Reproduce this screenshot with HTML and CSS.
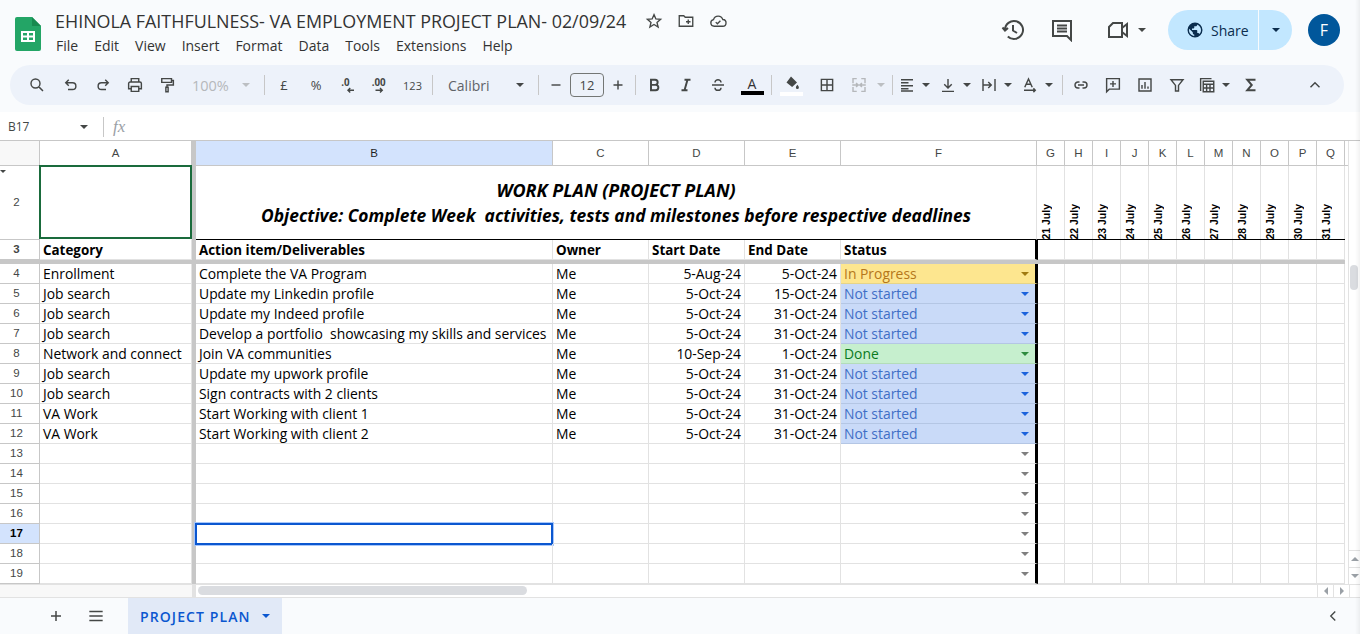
FILE: index.html
```html
<!DOCTYPE html>
<html lang="en">
<head>
    <meta charset="UTF-8">
    <meta name="viewport" content="width=device-width, initial-scale=1.0">
    <title>EHINOLA FAITHFULNESS- VA EMPLOYMENT PROJECT PLAN- 02/09/24</title>
    <link rel="stylesheet" href="styles.css">
</head>
<body>
    <!-- Title bar -->
    <header class="topbar">
        <svg class="logo" width="26" height="34" viewBox="0 0 26 34">
            <path d="M2 0h15l9 9v23a2 2 0 0 1-2 2H2a2 2 0 0 1-2-2V2a2 2 0 0 1 2-2z" fill="#23a566"/>
            <path d="M17 0l9 9h-9z" fill="#178a50"/>
            <path d="M6 14h14v11H6z M8 16v2.500h4V16z M14 16v2.500h4V16z M8 20.500V23h4v-2.500z M14 20.500V23h4v-2.500z" fill="#fff" fill-rule="evenodd"/>
        </svg>
        <div class="doc">
            <div class="doc-title">
                <span class="doc-name">EHINOLA FAITHFULNESS- VA EMPLOYMENT PROJECT PLAN- 02/09/24</span>
                <svg class="title-icon" viewBox="0 0 24 24"><path d="M12 3.500l2.500 5.800 6.300.5-4.800 4.100 1.500 6.100-5.500-3.300-5.500 3.300 1.500-6.100-4.800-4.100 6.300-.5z"/></svg>
                <svg class="title-icon" viewBox="0 0 24 24"><path d="M3 19V5h6l2 2h10v12z M12 13h6 M15 10v6"/></svg>
                <svg class="title-icon" viewBox="0 0 24 24"><path d="M7 19a4.500 4.500 0 0 1-1-8.900A6.500 6.500 0 0 1 18.400 10 4.500 4.500 0 0 1 18 19z M9 13.500l2.200 2.200 4-4"/></svg>
            </div>
            <nav class="menu">
                <span>File</span><span>Edit</span><span>View</span><span>Insert</span><span>Format</span><span>Data</span><span>Tools</span><span>Extensions</span><span>Help</span>
            </nav>
        </div>
        <div class="top-actions">
            <svg class="top-icon" viewBox="0 0 24 24"><path d="M4 12a9 9 0 1 1 2.800 6.500 M12 7v5.500l4 2.500 M1.500 9.500L4 12.500l3-2.500"/></svg>
            <svg class="top-icon comment-icon" viewBox="0 0 24 24"><path d="M3 3h18v19l-4-4H3z M7 7.500h10 M7 10.500h10 M7 13.500h10"/></svg>
            <svg class="top-icon video-icon" viewBox="0 0 24 24"><path d="M7 5h9v14H3V9z M16 10l5-4v12l-5-4"/></svg>
            <i class="arrow arrow-top"></i>
            <div class="share">
                <div class="share-main">
                    <svg width="18" height="18" viewBox="0 0 24 24"><path fill="#0b2d4e" d="M12 2a10 10 0 1 0 0 20 10 10 0 0 0 0-20zM4 12c0-.6.100-1.200.200-1.800L9 15v1c0 1.100.900 2 2 2v2c-3.900-.500-7-3.900-7-8zm13.900 5.400c-.300-.800-1-1.400-1.900-1.400h-1v-3c0-.600-.400-1-1-1H8v-2h2c.600 0 1-.400 1-1V7h2c1.100 0 2-.900 2-2v-.400c2.900 1.200 5 4.100 5 7.400 0 2.100-.800 4-2.100 5.400z"/></svg>
                    <span>Share</span>
                </div>
                <div class="share-more"><i class="arrow arrow-dark"></i></div>
            </div>
            <div class="avatar">F</div>
        </div>
    </header>

    <!-- Toolbar -->
    <div class="toolbar">
        <span class="tb tb-search"><svg viewBox="0 0 24 24"><path d="M10 4a6 6 0 1 0 0 12 6 6 0 0 0 0-12z M14.500 14.500L20 20"/></svg></span>
        <span class="tb"><svg viewBox="0 0 24 24"><path d="M9 5L5 9l4 4 M5 9h9a4.500 4.500 0 0 1 0 9H8"/></svg></span>
        <span class="tb"><svg viewBox="0 0 24 24"><path d="M15 5l4 4-4 4 M19 9h-9a4.500 4.500 0 0 0 0 9h6"/></svg></span>
        <span class="tb"><svg viewBox="0 0 24 24"><path d="M7 8V3.500h10V8 M7 17H3.500v-7a2 2 0 0 1 2-2h13a2 2 0 0 1 2 2v7H17 M7 14h10v6.500H7z"/></svg></span>
        <span class="tb"><svg viewBox="0 0 24 24"><path d="M5 3.500h13v5H5z M18 6h2.500v6H12v3 M10.500 15h3v6h-3z"/></svg></span>
        <span class="tb-zoom">100%<i class="arrow arrow-off"></i></span>
        <i class="sep"></i>
        <span class="tb tb-text">£</span>
        <span class="tb tb-text">%</span>
        <span class="tb"><svg viewBox="0 0 24 24"><text x="3" y="13" class="dec-text">.0</text><path d="M20 19h-8 M15 16l-3 3 3 3"/></svg></span>
        <span class="tb"><svg viewBox="0 0 24 24"><text x="1" y="13" class="dec-text">.00</text><path d="M6 19h9 M12 16l3 3-3 3"/></svg></span>
        <span class="tb tb-text tb-123">123</span>
        <i class="sep"></i>
        <span class="tb-font">Calibri<i class="arrow"></i></span>
        <i class="sep"></i>
        <span class="tb tb-narrow"><svg viewBox="0 0 24 24"><path d="M6 12h12"/></svg></span>
        <span class="font-size">12</span>
        <span class="tb tb-narrow"><svg viewBox="0 0 24 24"><path d="M6 12h12 M12 6v12"/></svg></span>
        <i class="sep sep-size"></i>
        <span class="tb"><svg viewBox="0 0 24 24"><path class="heavy" d="M8 5h5.500a3.300 3.300 0 0 1 0 6.800H8z M8 11.800h6.200a3.600 3.600 0 0 1 0 7.200H8z"/></svg></span>
        <span class="tb"><svg viewBox="0 0 24 24"><path class="heavy" d="M10 5h8 M6 19h8 M14 5l-4 14"/></svg></span>
        <span class="tb tb-strike"><svg viewBox="0 0 24 24"><path d="M4 12h16 M16 8.500c0-2-1.800-3.500-4-3.500s-4 1.500-4 3.500 M8 15.500c0 2 1.800 3.500 4 3.500s4-1.500 4-3.500"/></svg></span>
        <span class="tb tb-color"><b class="color-a">A</b><i class="color-bar"></i></span>
        <i class="sep"></i>
        <span class="tb tb-color tb-fill"><svg class="fill-icon" viewBox="0 0 24 24"><path fill="#444746" d="M12 2l8 8-6.500 6L6 10z M20.500 13s2 2.300 2 3.500a2 2 0 0 1-4 0c0-1.200 2-3.500 2-3.500z"/></svg><i class="color-bar color-bar-white"></i></span>
        <span class="tb"><svg viewBox="0 0 24 24"><path d="M4.500 4.500h15v15h-15z M12 4.500v15 M4.500 12h15"/></svg></span>
        <span class="tb tb-merge"><svg viewBox="0 0 24 24"><path d="M9 3.500H4v6 M15 3.500h5v6 M9 20.500H4v-6 M15 20.500h5v-6 M3 12h7 M21 12h-7 M8 9.500l3 2.500-3 2.500 M16 9.500l-3 2.500 3 2.500"/></svg><i class="arrow arrow-off"></i></span>
        <i class="sep sep-merge"></i>
        <span class="tb tb-drop"><svg viewBox="0 0 24 24"><path d="M4 5h16 M4 9h10 M4 13h16 M4 17h10 M4 20h16"/></svg><i class="arrow"></i></span>
        <span class="tb tb-drop"><svg viewBox="0 0 24 24"><path d="M12 4v12 M7 11l5 5 5-5 M4 20.500h16"/></svg><i class="arrow"></i></span>
        <span class="tb tb-drop"><svg viewBox="0 0 24 24"><path d="M4 4v16 M20 4v16 M4 12h11 M11 8l4 4-4 4"/></svg><i class="arrow"></i></span>
        <span class="tb tb-drop"><svg viewBox="0 0 24 24"><path d="M5 15L10 4l5 11 M7 11h6 M4 19h15 M16.500 16.500L19 19l-2.500 2.500"/></svg><i class="arrow"></i></span>
        <i class="sep sep-rot"></i>
        <span class="tb"><svg viewBox="0 0 24 24"><path d="M10 8H8a4 4 0 0 0 0 8h2 M14 8h2a4 4 0 0 1 0 8h-2 M8 12h8"/></svg></span>
        <span class="tb"><svg viewBox="0 0 24 24"><path d="M3.500 3.500h17v14H7l-3.500 3.500z M12 6.500v8 M8 10.500h8"/></svg></span>
        <span class="tb"><svg viewBox="0 0 24 24"><path d="M4 4h16v16H4z M8 17v-5 M12 17V8 M16 17v-3"/></svg></span>
        <span class="tb"><svg viewBox="0 0 24 24"><path d="M4 5h16l-6 7.500V20h-4v-7.500z"/></svg></span>
        <span class="tb tb-drop tb-calc"><svg viewBox="0 0 24 24"><path d="M3.500 20V3.500H18 M7 7h14v14H7z M7 11h14 M11.500 11v10 M16 11v10 M7 16h14"/></svg><i class="arrow"></i></span>
        <span class="tb tb-sigma"><svg viewBox="0 0 24 24"><path class="heavy" d="M18 5H7l6 7-6 7h11"/></svg></span>
        <span class="tb tb-collapse"><svg viewBox="0 0 24 24"><path d="M6 15l6-6 6 6"/></svg></span>
    </div>

    <!-- Formula bar -->
    <div class="formula">
        <span class="name-box">B17</span>
        <i class="arrow arrow-name"></i>
        <i class="formula-sep"></i>
        <span class="fx">fx</span>
    </div>

    <!-- Sheet -->
    <div class="sheet">
        <div class="grid">
            <div class="row row-head">
                <div class="corner"></div>
                <div class="col">A</div>
                <div class="bar"></div>
                <div class="col col-on">B</div>
                <div class="col">C</div>
                <div class="col">D</div>
                <div class="col">E</div>
                <div class="col">F</div>
                <div class="col-rest">
                    <span>G</span><span>H</span><span>I</span><span>J</span><span>K</span><span>L</span><span>M</span><span>N</span><span>O</span><span>P</span><span>Q</span>
                </div>
            </div>

            <div class="row row-title">
                <div class="rh"><i class="hidden-mark"></i>2</div>
                <div class="c logo-cell"></div>
                <div class="bar"></div>
                <div class="c title-cell">
                    <div class="title-1">WORK PLAN (PROJECT PLAN)</div>
                    <div class="title-2">Objective: Complete Week  activities, tests and milestones before respective deadlines</div>
                </div>
                <div class="rest rest-dates">
                    <span>21 July</span><span>22 July</span><span>23 July</span><span>24 July</span><span>25 July</span><span>26 July</span><span>27 July</span><span>28 July</span><span>29 July</span><span>30 July</span><span>31 July</span>
                </div>
            </div>

            <div class="row row-bold">
                <div class="rh">3</div>
                <div class="c">Category</div>
                <div class="bar"></div>
                <div class="c">Action item/Deliverables</div>
                <div class="c">Owner</div>
                <div class="c">Start Date</div>
                <div class="c">End Date</div>
                <div class="c st">Status</div>
                <div class="rest"></div>
            </div>
            <div class="freeze"></div>

            <div class="row">
                <div class="rh">4</div><div class="c">Enrollment</div><div class="bar"></div>
                <div class="c">Complete the VA Program</div><div class="c">Me</div>
                <div class="c num">5-Aug-24</div><div class="c num">5-Oct-24</div>
                <div class="c st drop progress">In Progress</div><div class="rest"></div>
            </div>
            <div class="row">
                <div class="rh">5</div><div class="c">Job search</div><div class="bar"></div>
                <div class="c">Update my Linkedin profile</div><div class="c">Me</div>
                <div class="c num">5-Oct-24</div><div class="c num">15-Oct-24</div>
                <div class="c st drop todo">Not started</div><div class="rest"></div>
            </div>
            <div class="row">
                <div class="rh">6</div><div class="c">Job search</div><div class="bar"></div>
                <div class="c">Update my Indeed profile</div><div class="c">Me</div>
                <div class="c num">5-Oct-24</div><div class="c num">31-Oct-24</div>
                <div class="c st drop todo">Not started</div><div class="rest"></div>
            </div>
            <div class="row">
                <div class="rh">7</div><div class="c">Job search</div><div class="bar"></div>
                <div class="c">Develop a portfolio  showcasing my skills and services</div><div class="c">Me</div>
                <div class="c num">5-Oct-24</div><div class="c num">31-Oct-24</div>
                <div class="c st drop todo">Not started</div><div class="rest"></div>
            </div>
            <div class="row">
                <div class="rh">8</div><div class="c">Network and connect</div><div class="bar"></div>
                <div class="c">Join VA communities</div><div class="c">Me</div>
                <div class="c num">10-Sep-24</div><div class="c num">1-Oct-24</div>
                <div class="c st drop done">Done</div><div class="rest"></div>
            </div>
            <div class="row">
                <div class="rh">9</div><div class="c">Job search</div><div class="bar"></div>
                <div class="c">Update my upwork profile</div><div class="c">Me</div>
                <div class="c num">5-Oct-24</div><div class="c num">31-Oct-24</div>
                <div class="c st drop todo">Not started</div><div class="rest"></div>
            </div>
            <div class="row">
                <div class="rh">10</div><div class="c">Job search</div><div class="bar"></div>
                <div class="c">Sign contracts with 2 clients</div><div class="c">Me</div>
                <div class="c num">5-Oct-24</div><div class="c num">31-Oct-24</div>
                <div class="c st drop todo">Not started</div><div class="rest"></div>
            </div>
            <div class="row">
                <div class="rh">11</div><div class="c">VA Work</div><div class="bar"></div>
                <div class="c">Start Working with client 1</div><div class="c">Me</div>
                <div class="c num">5-Oct-24</div><div class="c num">31-Oct-24</div>
                <div class="c st drop todo">Not started</div><div class="rest"></div>
            </div>
            <div class="row">
                <div class="rh">12</div><div class="c">VA Work</div><div class="bar"></div>
                <div class="c">Start Working with client 2</div><div class="c">Me</div>
                <div class="c num">5-Oct-24</div><div class="c num">31-Oct-24</div>
                <div class="c st drop todo">Not started</div><div class="rest"></div>
            </div>
            <div class="row">
                <div class="rh">13</div><div class="c"></div><div class="bar"></div><div class="c"></div><div class="c"></div><div class="c"></div><div class="c"></div><div class="c st drop"></div><div class="rest"></div>
            </div>
            <div class="row">
                <div class="rh">14</div><div class="c"></div><div class="bar"></div><div class="c"></div><div class="c"></div><div class="c"></div><div class="c"></div><div class="c st drop"></div><div class="rest"></div>
            </div>
            <div class="row">
                <div class="rh">15</div><div class="c"></div><div class="bar"></div><div class="c"></div><div class="c"></div><div class="c"></div><div class="c"></div><div class="c st drop"></div><div class="rest"></div>
            </div>
            <div class="row">
                <div class="rh">16</div><div class="c"></div><div class="bar"></div><div class="c"></div><div class="c"></div><div class="c"></div><div class="c"></div><div class="c st drop"></div><div class="rest"></div>
            </div>
            <div class="row">
                <div class="rh rh-on">17</div><div class="c"></div><div class="bar"></div><div class="c active"></div><div class="c"></div><div class="c"></div><div class="c"></div><div class="c st drop"></div><div class="rest"></div>
            </div>
            <div class="row">
                <div class="rh">18</div><div class="c"></div><div class="bar"></div><div class="c"></div><div class="c"></div><div class="c"></div><div class="c"></div><div class="c st drop"></div><div class="rest"></div>
            </div>
            <div class="row">
                <div class="rh">19</div><div class="c"></div><div class="bar"></div><div class="c"></div><div class="c"></div><div class="c"></div><div class="c"></div><div class="c st drop"></div><div class="rest"></div>
            </div>
        </div>

        <div class="vscroll">
            <div class="vthumb"></div>
            <div class="vbtns">
                <span class="sbtn"><i class="tri tri-up"></i></span>
                <span class="sbtn"><i class="tri tri-down"></i></span>
            </div>
        </div>
    </div>

    <div class="hscroll">
        <div class="hs-frozen"></div>
        <div class="hs-track"><div class="hthumb"></div></div>
        <span class="sbtn-h"><i class="tri tri-left"></i></span>
        <span class="sbtn-h"><i class="tri tri-right"></i></span>
        <div class="hs-end"></div>
    </div>

    <!-- Sheet tabs -->
    <footer class="tabbar">
        <svg class="tab-icon" viewBox="0 0 24 24"><path d="M12 6v12 M6 12h12"/></svg>
        <svg class="tab-icon" viewBox="0 0 24 24"><path d="M4 6.500h16 M4 12h16 M4 17.500h16"/></svg>
        <div class="tab">PROJECT PLAN<i class="arrow arrow-blue"></i></div>
        <svg class="tab-icon tab-side" viewBox="0 0 24 24"><path d="M15 6l-6 6 6 6"/></svg>
    </footer>
</body>
</html>
```

FILE: styles.css
```css
* {
    box-sizing: border-box;
}

html, body {
    margin: 0;
    height: 100%;
    overflow: hidden;
}

body {
    display: flex;
    flex-direction: column;
    background: #f9fbfd;
    color: #444746;
    font-family: "Open Sans", sans-serif;
}

/* soft shadow on the right edge of the window */
body::after {
    content: "";
    position: fixed;
    top: 0;
    right: 0;
    bottom: 0;
    width: 5px;
    background: linear-gradient(to right, rgba(0, 0, 0, 0), rgba(0, 0, 0, 0.05));
    pointer-events: none;
}

.arrow {
    display: inline-block;
    width: 0;
    height: 0;
    border-left: 4px solid transparent;
    border-right: 4px solid transparent;
    border-top: 4px solid #444746;
}

.arrow-off {
    border-top-color: #bcbfc2;
}

.arrow-dark {
    border-top-color: #0b2d4e;
}

.arrow-blue {
    border-top-color: #0b57d0;
}

/* Title bar */
.topbar {
    display: flex;
    height: 65px;
    flex: none;
}

.logo {
    margin: 17px 14px 0 15px;
    flex: none;
}

.doc {
    padding-top: 8px;
}

.doc-title {
    display: flex;
    align-items: center;
    height: 25px;
}

.doc-name {
    font-size: 17.9px;
    color: #333;
    white-space: nowrap;
}

.title-icon {
    width: 18px;
    height: 18px;
    margin-left: 14px;
    fill: none;
    stroke: #444746;
    stroke-width: 1.8;
}

.title-icon:first-of-type {
    margin-left: 19px;
}

.menu {
    display: flex;
    gap: 16px;
    margin-top: 3px;
    padding-left: 1px;
    font-size: 14px;
    line-height: 20px;
    color: #333;
}

.top-actions {
    display: flex;
    align-items: center;
    height: 60px;
    margin-left: auto;
    padding-right: 20px;
}

.top-icon {
    width: 24px;
    height: 24px;
    margin-right: 25px;
    fill: none;
    stroke: #444746;
    stroke-width: 2;
}

.comment-icon {
    margin-right: 32px;
}

.video-icon {
    margin-right: 8px;
}

.arrow-top {
    margin-right: 22px;
}

.share {
    display: flex;
    height: 40px;
    border-radius: 20px;
    overflow: hidden;
    color: #0b2d4e;
    font-size: 14px;
}

.share-main {
    display: flex;
    align-items: center;
    gap: 7px;
    width: 90px;
    padding-left: 18px;
    background: #c2e7ff;
}

.share-more {
    display: flex;
    align-items: center;
    justify-content: center;
    width: 33px;
    margin-left: 1px;
    background: #c2e7ff;
}

.avatar {
    width: 32px;
    height: 32px;
    margin-left: 16px;
    border-radius: 50%;
    background: #01579b;
    color: #fff;
    font-size: 16px;
    line-height: 32px;
    text-align: center;
}

/* Toolbar */
.toolbar {
    display: flex;
    align-items: center;
    flex: none;
    width: 1334px;
    height: 40px;
    margin-left: 10px;
    padding-left: 11px;
    border-radius: 20px;
    background: #edf2fa;
}

.tb {
    display: flex;
    align-items: center;
    justify-content: center;
    flex: none;
    position: relative;
    width: 32px;
    height: 28px;
    font-size: 12px;
}

.tb svg {
    width: 18px;
    height: 18px;
    fill: none;
    stroke: #444746;
    stroke-width: 1.9;
}

.tb svg .heavy {
    stroke-width: 2.6;
}

.tb-search {
    margin-right: 2px;
}

.tb-zoom {
    display: flex;
    align-items: center;
    justify-content: space-between;
    flex: none;
    width: 78px;
    padding: 0 11px 0 9px;
    font-size: 14.500px;
    color: #b5b8bb;
}

.sep {
    flex: none;
    width: 1px;
    height: 20px;
    margin: 0 3px;
    background: #c7c7c7;
}

.sep-size {
    margin-right: 2px;
}

.tb-text {
    font-size: 13px;
}

.tb-123 {
    width: 33px;
    font-size: 11px;
}

.dec-text {
    fill: #444746;
    stroke: none;
    font-size: 13px;
    font-weight: 700;
}

.tb-font {
    display: flex;
    align-items: center;
    justify-content: space-between;
    flex: none;
    width: 99px;
    padding: 0 11px 0 12px;
    font-size: 14px;
    color: #5f6368;
}

.tb-narrow {
    width: 28px;
}

.font-size {
    flex: none;
    width: 34px;
    height: 24px;
    margin: 0;
    border: 1px solid #747775;
    border-radius: 4px;
    font-size: 13px;
    line-height: 22px;
    text-align: center;
}

.tb-strike {
    margin-right: 2px;
}

.tb-color {
    flex-direction: column;
}

.tb-fill {
    margin-right: 4px;
}

.color-a {
    font-size: 14px;
    line-height: 15px;
    font-weight: 400;
    color: #333;
}

.color-bar {
    width: 23px;
    height: 4px;
    background: #000;
}

.color-bar-white {
    background: #fff;
}

.tb svg.fill-icon {
    stroke: none;
    margin-bottom: -1px;
}

.tb-merge {
    justify-content: flex-start;
    padding-left: 7px;
    width: 47px;
}

.tb-merge svg {
    stroke: #b5b8bb;
    flex: none;
}

.tb-merge .arrow {
    margin-left: 9px;
}

.tb-drop {
    justify-content: flex-start;
    width: 41px;
}

.tb-drop svg {
    flex: none;
}

.tb-drop .arrow {
    margin-left: 6px;
}

.sep-merge {
    margin: 0 5px 0 2px;
}

.sep-rot {
    margin: 0 2px 0 0;
}

.tb-calc {
    margin-left: 5px;
}

.tb-sigma {
    margin-left: -4px;
}

.tb-collapse {
    margin-left: 32px;
}

/* Formula bar */
.formula {
    display: flex;
    align-items: center;
    flex: none;
    height: 36px;
    padding: 8px 0 0 8px;
    border-bottom: 1px solid #c7c7c7;
    background: linear-gradient(to bottom, #f9fbfd 7px, #fff 7px);
    font-size: 12px;
    color: #444746;
}

.name-box {
    width: 72px;
}

.arrow-name {
    margin-right: 15px;
}

.formula-sep {
    width: 1px;
    height: 20px;
    margin-right: 9px;
    background: #c7c7c7;
}

.fx {
    font-family: "Liberation Serif", serif;
    font-style: italic;
    font-size: 17px;
    color: #9aa0a6;
}

/* Sheet */
.sheet {
    display: flex;
    flex: none;
    height: 443px;
    background: #fff;
}

.grid {
    flex: none;
    width: 1348px;
}

.row {
    display: grid;
    grid-template-columns: 40px 152px 4px 357px 96px 96px 96px 196px 311px;
    height: 20px;
    font-size: 13.9px;
    color: #000;
}

.row-head {
    height: 25px;
    font-family: "Liberation Sans", sans-serif;
    font-size: 11.5px;
    color: #444746;
}

.corner, .col, .rh {
    border-right: 1px solid #c7c7c7;
    border-bottom: 1px solid #c7c7c7;
    background: #fff;
}

.corner {
    background: #f8f8f8;
}

.col {
    line-height: 24px;
    text-align: center;
}

.col-on {
    background: #d3e3fd;
    color: #1f1f1f;
}

.col-rest {
    display: flex;
    border-bottom: 1px solid #c7c7c7;
}

.col-rest span {
    width: 28px;
    border-right: 1px solid #c7c7c7;
    line-height: 24px;
    text-align: center;
}

.bar {
    background: #c7c7c7;
}

.rh {
    position: relative;
    padding-right: 6px;
    font-family: "Liberation Sans", sans-serif;
    font-size: 11.5px;
    line-height: 19px;
    text-align: center;
    color: #444746;
}

.rh-on {
    background: #d3e3fd;
    color: #000;
    font-weight: 700;
}

.c {
    position: relative;
    display: flex;
    align-items: center;
    padding: 0 3px;
    border-right: 1px solid #e2e2e2;
    border-bottom: 1px solid #e2e2e2;
    white-space: pre;
}

.num {
    justify-content: flex-end;
}

.rest {
    margin-right: 3px;
    border-bottom: 1px solid #e2e2e2;
    background: repeating-linear-gradient(to right, #fff 0, #fff 27px, #e2e2e2 27px, #e2e2e2 28px);
}

/* Row 2 */
.row-title {
    height: 74px;
}

.row-title .rh {
    line-height: 72px;
}

.hidden-mark {
    position: absolute;
    top: 4px;
    left: 0;
    border-left: 3px solid transparent;
    border-right: 3px solid transparent;
    border-top: 3px solid #444746;
}

.logo-cell {
    border-bottom-color: #fff;
}

.logo-cell::after {
    content: "";
    position: absolute;
    top: -1px;
    left: -1px;
    right: -1px;
    bottom: 0;
    border: 2px solid #1a6b3c;
}

.title-cell {
    grid-column: 4 / span 5;
    display: block;
    padding: 12px 0 0;
    border-bottom: 1px solid #000;
    white-space: normal;
    font-style: italic;
    font-weight: 700;
    text-align: center;
}

.title-1 {
    font-size: 18px;
    line-height: 25px;
    white-space: pre;
}

.title-2 {
    font-size: 17.4px;
    line-height: 25px;
    white-space: pre;
}

.rest-dates {
    display: flex;
    align-items: flex-end;
    border-bottom-color: #000;
    font-family: "Liberation Sans", sans-serif;
    font-size: 10.5px;
    font-weight: 700;
}

.rest-dates span {
    display: block;
    width: 28px;
    margin-bottom: -1px;
    padding-right: 3px;
    writing-mode: vertical-rl;
    transform: rotate(180deg);
    white-space: nowrap;
}

/* Row 3 */
.row-bold {
    font-size: 13.4px;
    font-weight: 700;
}

.freeze {
    width: 1345px;
    height: 4px;
    background: #c7c7c7;
}

/* Status column */
.st {
    margin-right: -1px;
    border-right: 3px solid #000;
}

.drop::after {
    content: "";
    margin-left: auto;
    margin-right: 3px;
    border-left: 4.500px solid transparent;
    border-right: 4.500px solid transparent;
    border-top: 4.500px solid #7f7f7f;
}

.progress {
    background: #fde68f;
    color: #b5771a;
    border-bottom-color: #e6d488;
}

.progress::after {
    border-top-color: #a07a10;
}

.todo {
    background: #c9daf8;
    color: #3f6ec6;
    border-bottom-color: #b4c6e4;
}

.todo::after {
    border-top-color: #1c62dc;
}

.done {
    background: #c6efce;
    color: #0a7a1e;
    border-bottom-color: #b3dcb9;
}

.done::after {
    border-top-color: #2e8b3e;
}

.active::after {
    content: "";
    position: absolute;
    top: -1px;
    left: -1px;
    right: -1px;
    bottom: -2px;
    border: 2px solid #0b57d0;
    outline: 1px solid #a8c7fa;
}

/* Scrollbars */
.vscroll {
    display: flex;
    flex-direction: column;
    flex: none;
    width: 12px;
    padding-top: 124px;
    border-left: 1px solid #e2e2e2;
    background: #fff;
}

.vthumb {
    width: 8px;
    height: 25px;
    margin-left: 1px;
    border-radius: 4px;
    background: #dadce0;
}

.vbtns {
    margin-top: auto;
}

.sbtn {
    display: flex;
    align-items: center;
    justify-content: center;
    height: 17px;
    border-top: 1px solid #e2e2e2;
}

.tri {
    width: 0;
    height: 0;
    border: 4px solid transparent;
}

.tri-up {
    border-top: 0;
    border-bottom-color: #9aa0a6;
}

.tri-down {
    border-bottom: 0;
    border-top-color: #9aa0a6;
}

.tri-left {
    border-left: 0;
    border-right-color: #9aa0a6;
}

.tri-right {
    border-right: 0;
    border-left-color: #9aa0a6;
}

.hscroll {
    display: flex;
    align-items: stretch;
    flex: none;
    height: 14px;
    border-top: 1px solid #e2e2e2;
    border-bottom: 1px solid #e2e2e2;
    background: #fff;
}

.hs-frozen {
    flex: none;
    width: 196px;
    background: #f8f8f8;
    border-right: 4px solid #e2e2e2;
}

.hs-track {
    flex: none;
    width: 1121px;
    padding: 1px 0 0 2px;
}

.hthumb {
    width: 329px;
    height: 9px;
    border-radius: 5px;
    background: #dadce0;
}

.sbtn-h {
    display: flex;
    align-items: center;
    justify-content: center;
    flex: none;
    width: 16px;
    border-left: 1px solid #e2e2e2;
}

.hs-end {
    flex: 1;
    border-left: 1px solid #e2e2e2;
}

/* Sheet tabs */
.tabbar {
    display: flex;
    align-items: center;
    flex: 1;
    padding-left: 46px;
    border-bottom: 1px solid #e2e2e2;
}

.tab-icon {
    width: 20px;
    height: 20px;
    margin-right: 20px;
    fill: none;
    stroke: #444746;
    stroke-width: 1.8;
}

.tab {
    display: flex;
    align-items: center;
    gap: 11px;
    width: 154px;
    height: 36px;
    margin-left: 2px;
    padding-left: 12px;
    background: #e1e9f7;
    color: #0b57d0;
    font-size: 14px;
    font-weight: 600;
    letter-spacing: 1.1px;
}

.tab-side {
    width: 18px;
    height: 18px;
    margin-left: auto;
    margin-right: 18px;
}
```
